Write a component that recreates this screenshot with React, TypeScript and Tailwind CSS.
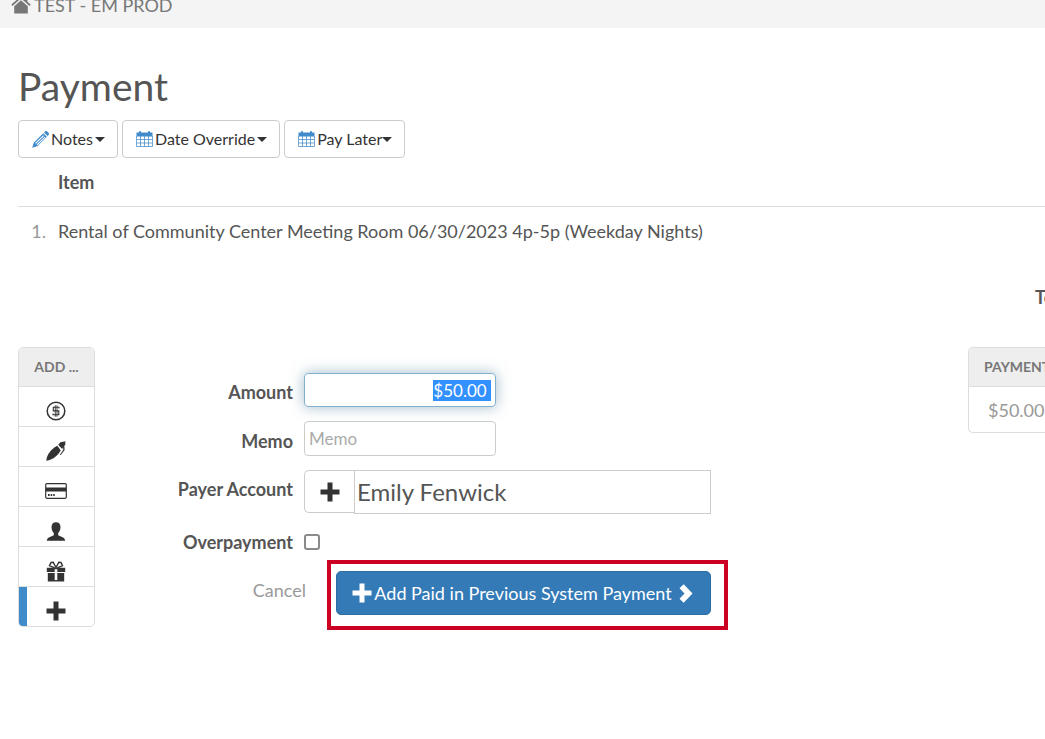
import { useEffect, useRef, type ReactNode } from "react";

type IconProps = { className?: string };

function HomeIcon({ className }: IconProps) {
  return (
    <svg viewBox="0 0 20 18" className={className} fill="currentColor" aria-hidden="true">
      <path d="M10 0 0.3 8.600l1.200 1.300L10 2.400l8.500 7.500 1.200-1.300L16.400 5.700V1h-2.600v2.400z" />
      <path d="M10 4.200 3.200 10.200V17.500h13.600v-7.300z" />
    </svg>
  );
}

function PencilIcon({ className }: IconProps) {
  return (
    <svg viewBox="0 0 16 16" className={className} fill="currentColor" aria-hidden="true">
      <path d="M11.300 1.400 12.300.4a1.400 1.400 0 0 1 2 0l1.300 1.300a1.400 1.400 0 0 1 0 2l-1 1z" />
      <path
        fillRule="evenodd"
        d="M10.600 2 14 5.400 5 14.400.2 15.800l1.400-4.800zM10.500 4 3 11.400l.7.7L11.200 4.700zM11.900 5.300 4.400 12.700l.6.6L12.600 6z"
      />
    </svg>
  );
}

function CalendarIcon({ className }: IconProps) {
  return (
    <svg viewBox="0 0 17 16" className={className} aria-hidden="true">
      <path fill="currentColor" d="M.5 1.500H3V.3h2v1.200h7V.3h2v1.200h2.500V5.500H.5z" />
      <path
        fill="none"
        stroke="currentColor"
        strokeOpacity="0.75"
        d="M.5 5v10.500h16V5M4.500 5v10.500M8.500 5v10.500M12.500 5v10.500M1 8.500h15M1 12h15"
      />
    </svg>
  );
}

function PlusIcon({ className }: IconProps) {
  return (
    <svg viewBox="0 0 20 20" className={className} fill="currentColor" aria-hidden="true">
      <path d="M7.500 0.500h5v7h7v5h-7v7h-5v-7h-7v-5h7z" />
    </svg>
  );
}

function ChevronIcon({ className }: IconProps) {
  return (
    <svg viewBox="0 0 14 19" className={className} fill="currentColor" aria-hidden="true">
      <path d="M4.700.3 13.500 9.500 4.700 18.700.5 14.700 5.500 9.500.5 4.300z" />
    </svg>
  );
}

function DollarIcon({ className }: IconProps) {
  return (
    <svg viewBox="0 0 20 20" className={className} fill="none" stroke="currentColor" aria-hidden="true">
      <circle cx="10" cy="10" r="8.800" strokeWidth="1.500" />
      <path strokeWidth="1.100" d="M13 7.500V6.200H7.300v3.700h5.500v3.900H7v-1.300" />
      <path strokeWidth="0.900" d="M9.300 4.300v11.400M11 4.300v11.400" />
    </svg>
  );
}

function PenIcon({ className }: IconProps) {
  return (
    <svg viewBox="0 0 20 20" className={className} fill="currentColor" aria-hidden="true">
      <path d="M.3 19.800C.8 14 4 9 11.300 4.800l3.400 4.400C12.500 14 7.500 18.500.3 19.800z" />
      <path d="M12.200 3.700 14.500 1.200l5.200-.9-.7 2 .7 1-1.400 1.500.3 4.200-4 5.200-.7-.5 3.400-4.900-.2-2.600-1 1.700z" />
    </svg>
  );
}

function CardIcon({ className }: IconProps) {
  return (
    <svg viewBox="0 0 22 16" className={className} aria-hidden="true">
      <rect x=".7" y=".7" width="20.600" height="14.600" rx="1.200" fill="none" stroke="currentColor" strokeWidth="1.200" />
      <path fill="currentColor" d="M1 4.500h20v4H1zM3 11h1.700v2H3zM5.700 11h1.500v2H5.700zM8.200 11h1.500v2H8.200z" />
    </svg>
  );
}

function UserIcon({ className }: IconProps) {
  return (
    <svg viewBox="0 0 20 19" className={className} fill="currentColor" aria-hidden="true">
      <path d="M10 .3c3 0 4.500 2 4.500 4.900 0 2.600-1 4.500-2.300 5.700v2.300c2.800 1.300 6.600 2 7 5.500H.8c.4-3.500 4.200-4.200 7-5.500v-2.300C6.500 9.700 5.500 7.800 5.500 5.200 5.500 2.300 7 .3 10 .3z" />
    </svg>
  );
}

function GiftIcon({ className }: IconProps) {
  return (
    <svg viewBox="0 0 20 21" className={className} aria-hidden="true">
      <path fill="currentColor" d="M.8 6.800h7.900v4.200H.8zM11.300 6.800h7.900v4.200h-7.900zM1.800 12h6.900v8.500H1.800zM11.300 12h6.900v8.500h-6.900z" />
      <path fill="none" stroke="currentColor" strokeWidth="1.400" d="M8.600 6.800 3.500 4.700 5 1.500l2.200-.3L10 6.500l2.800-5.300 2.200.3 1.500 3.200L11.400 6.800M8.500 7.500h3M8.500 19.800h3" />
    </svg>
  );
}

function Caret() {
  return <span className="border-x-5 border-t-5 border-x-transparent border-t-[#333]" />;
}

function ToolButton({ icon, label, gap = true }: { icon: ReactNode; label: string; gap?: boolean }) {
  return (
    <button
      type="button"
      className="flex h-[38px] items-center rounded-sm border border-[#ccc] bg-white pr-3 pl-[13px] text-[16px] text-[#333]"
    >
      {icon}
      <span className={gap ? "pr-[2px]" : ""}>{label}</span>
      <Caret />
    </button>
  );
}

const methods = [
  { name: "Cash", icon: <DollarIcon className="size-5" /> },
  { name: "Check", icon: <PenIcon className="size-5" /> },
  { name: "Card", icon: <CardIcon className="h-4 w-[22px]" /> },
  { name: "Account", icon: <UserIcon className="h-[19px] w-5" /> },
  { name: "Gift", icon: <GiftIcon className="h-[21px] w-5" /> },
];

function AddPanel() {
  return (
    <nav aria-label="Add" className="w-[77px] shrink-0 overflow-hidden rounded-[5px] border border-[#ddd]">
      <h2 className="flex h-[38px] items-center justify-center bg-[#eee] text-[14px] font-bold text-[#777]">ADD ...</h2>
      {methods.map((m) => (
        <button
          key={m.name}
          type="button"
          aria-label={m.name}
          className="flex h-10 w-full items-center justify-center border-t border-[#ddd] pt-[9px] pr-px text-[#333]"
        >
          {m.icon}
        </button>
      ))}
      <div className="flex border-t border-[#ddd]">
        <span className="w-2 bg-[#428bca]" />
        <button
          type="button"
          aria-label="Other"
          className="flex h-[39px] flex-1 items-center justify-center pt-[9px] pr-[10px] text-[#333]"
        >
          <PlusIcon className="size-5" />
        </button>
      </div>
    </nav>
  );
}

function Label({ id, children }: { id: string; children: ReactNode }) {
  return (
    <label htmlFor={id} className="text-right font-bold">
      {children}
    </label>
  );
}

function PaymentForm() {
  const amount = useRef<HTMLInputElement>(null);
  useEffect(() => {
    amount.current?.focus();
    amount.current?.select();
  }, []);

  return (
    <form className="min-w-0 flex-1 pt-[26px]" onSubmit={(e) => e.preventDefault()}>
      <div className="grid grid-cols-[198px_1fr] items-center gap-x-[11px] gap-y-[14px]">
        <div className="flex justify-end pt-1">
          <Label id="amount">Amount</Label>
        </div>
        <input
          id="amount"
          ref={amount}
          defaultValue="$50.00 "
          className="h-[34px] w-[192px] rounded-sm border border-[#7fb0cd] px-1 text-right text-[17px] shadow-[0_0_14px_rgba(70,120,150,0.5)] outline-none selection:bg-[#3390ff] selection:text-white"
        />
        <div className="flex justify-end pt-1">
          <Label id="memo">Memo</Label>
        </div>
        <input
          id="memo"
          placeholder="Memo"
          className="h-[35px] w-[192px] rounded-sm border border-[#ccc] px-1 text-[17px] outline-none placeholder:text-[#aaa]"
        />
        <div className="flex justify-end pb-[6px]">
          <Label id="payer">Payer Account</Label>
        </div>
        <div className="flex items-start">
          <button
            type="button"
            aria-label="Add payer"
            className="flex h-[43px] w-[50px] items-center justify-center rounded-l-[5px] border border-r-0 border-[#ccc] text-[#333]"
          >
            <PlusIcon className="size-5" />
          </button>
          <input
            id="payer"
            defaultValue="Emily Fenwick"
            className="h-11 w-[357px] border border-[#ccc] px-[2px] pb-[2px] text-[24px] outline-none"
          />
        </div>
      </div>
      <div className="mt-3 mb-[2px] grid h-8 grid-cols-[198px_1fr] items-center gap-x-[11px]">
        <Label id="over">Overpayment</Label>
        <input id="over" type="checkbox" className="size-4 appearance-none rounded-[3px] border-2 border-[#8a8a8a] bg-white" />
      </div>
      <div className="flex items-start">
        <div className="w-[211px] pt-[18px] text-right">
          <a href="#cancel" className="text-[#999]">
            Cancel
          </a>
        </div>
        <div className="ml-[21px] border-4 border-[#cc0022] pt-[7px] pr-[13px] pb-[11px] pl-[5px]">
          <button
            type="submit"
            className="flex h-11 w-[375px] items-center justify-center rounded-[5px] border border-[#2e6da4] bg-[#337ab7] pr-[2px] whitespace-nowrap text-white"
          >
            <PlusIcon className="mr-[2px] size-5" />
            Add Paid in Previous System Payment
            <ChevronIcon className="ml-[7px] h-[19px] w-[14px]" />
          </button>
        </div>
      </div>
    </form>
  );
}

export default function App() {
  return (
    <div className="min-h-screen overflow-x-hidden bg-white font-[Lato,sans-serif] text-[18px] leading-6 text-[#555]">
      <header className="flex h-7 items-start overflow-hidden bg-[#f4f4f4] pl-[11px] text-[#777]">
        <div className="-mt-[7px] flex items-center">
          <HomeIcon className="mr-[3px] h-[18px] w-5" />
          TEST - EM PROD
        </div>
      </header>
      <main className="pl-[18px]">
        <h1 className="pt-[34px] text-[39px] leading-12">Payment</h1>
        <div className="mt-[10px] flex gap-1">
          <ToolButton label="Notes" icon={<PencilIcon className="mr-[2px] size-[17px] text-[#428bca]" />} />
          <ToolButton label="Date Override" icon={<CalendarIcon className="mr-[2px] h-4 w-[17px] text-[#428bca]" />} />
          <ToolButton label="Pay Later" gap={false} icon={<CalendarIcon className="mr-[2px] h-4 w-[17px] text-[#428bca]" />} />
        </div>
        <table className="w-full border-collapse text-left">
          <thead>
            <tr className="h-12 border-b border-[#ddd]">
              <td className="w-10" />
              <th scope="col" className="font-bold">Item</th>
            </tr>
          </thead>
          <tbody>
            <tr className="h-[49px]">
              <td className="w-10 pr-3 text-right text-[#999]">1.</td>
              <td>Rental of Community Center Meeting Room 06/30/2023 4p-5p (Weekday Nights)</td>
            </tr>
          </tbody>
        </table>
        <div className="mt-[30px] flex justify-end font-bold">
          <span className="w-[10px] whitespace-nowrap">Total</span>
        </div>
        <div className="mt-[38px] flex items-start">
          <AddPanel />
          <PaymentForm />
          <section className="w-[77px] shrink-0 overflow-hidden rounded-l-[5px] border border-r-0 border-[#ddd] whitespace-nowrap">
            <h2 className="flex h-[39px] items-center border-b border-[#ddd] bg-[#eee] pl-[15px] text-[14px] font-bold text-[#777]">
              PAYMENT
            </h2>
            <p className="flex h-[45px] items-center pl-[19px] text-[#999]">$50.00</p>
          </section>
        </div>
      </main>
    </div>
  );
}
